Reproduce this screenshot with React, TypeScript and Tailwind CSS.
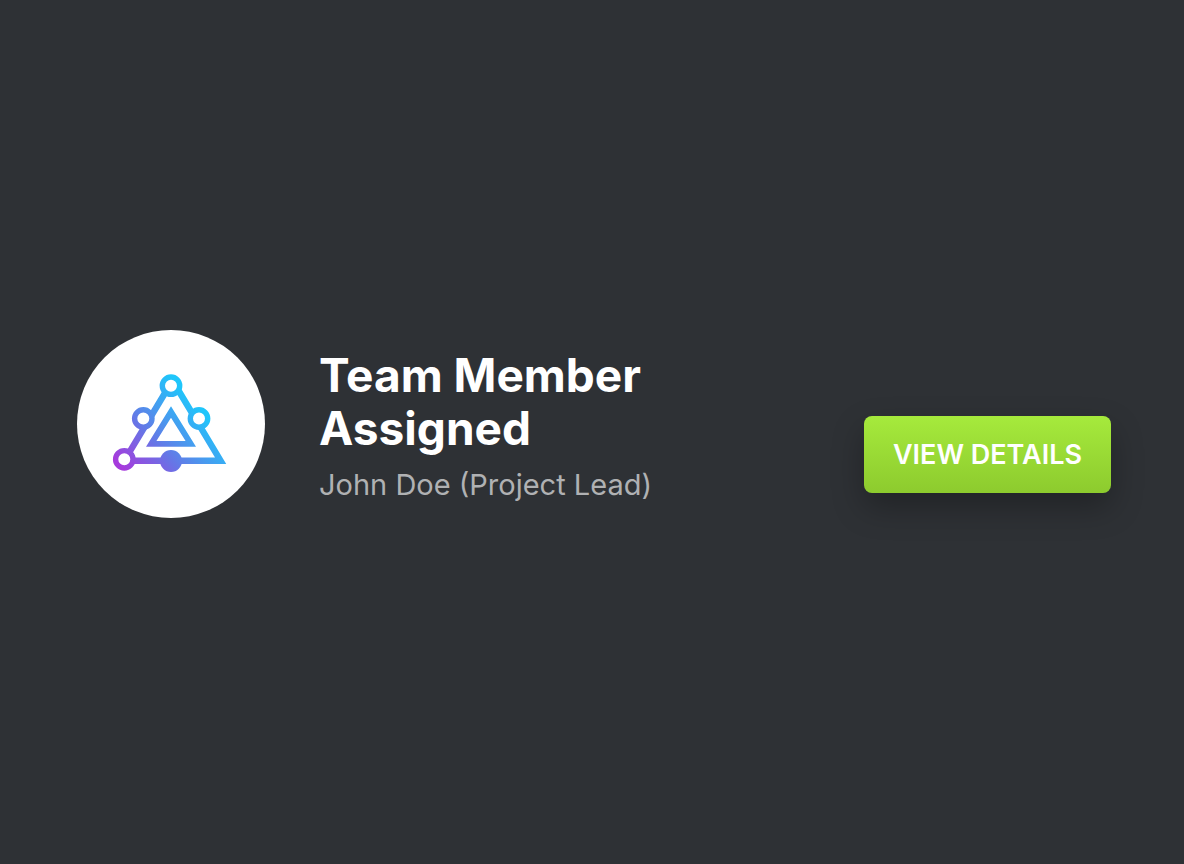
const rings = [
  { cx: 94, cy: 55.7 },
  { cx: 66.3, cy: 88.5 },
  { cx: 122, cy: 88.5 },
  { cx: 47.3, cy: 129.3 },
];

function TeamLogo() {
  return (
    <svg viewBox="0 0 188 188" className="h-full w-full" aria-hidden="true">
      <defs>
        <linearGradient
          id="logo-gradient"
          gradientUnits="userSpaceOnUse"
          x1="42"
          y1="134"
          x2="114"
          y2="68"
        >
          <stop offset="0" stopColor="#a63bdc" />
          <stop offset="0.42" stopColor="#6676e6" />
          <stop offset="0.65" stopColor="#4a98ee" />
          <stop offset="1" stopColor="#1fc6fb" />
        </linearGradient>
      </defs>

      {/* Outer path */}
      <path
        d="M94 53 L47.3 130.7 H143.6 L94 48"
        fill="none"
        stroke="url(#logo-gradient)"
        strokeWidth="6.4"
      />

      {/* Inner triangle */}
      <path
        fillRule="evenodd"
        fill="url(#logo-gradient)"
        d="M94 76.3 L119 116.7 H69 Z M94 87.8 L79.4 111 H108.6 Z"
      />

      {/* Nodes */}
      {rings.map((ring) => (
        <circle
          key={`${ring.cx}-${ring.cy}`}
          cx={ring.cx}
          cy={ring.cy}
          r="8.7"
          fill="#fff"
          stroke="url(#logo-gradient)"
          strokeWidth="5.4"
        />
      ))}
      <circle cx="94" cy="131" r="11" fill="url(#logo-gradient)" />
    </svg>
  );
}

export default function App() {
  return (
    <main className="flex min-h-screen items-center bg-[#2e3135] pr-[73px] pb-4 pl-[77px] font-['Inter',sans-serif]">
      <section className="flex w-full items-center justify-between">
        <div className="flex items-center gap-[54px]">
          <div className="size-[188px] shrink-0 overflow-hidden rounded-full bg-white">
            <TeamLogo />
          </div>

          <div className="max-w-[360px] pt-1.5">
            <h1 className="text-[46px] leading-[53px] font-bold text-white">
              Team Member Assigned
            </h1>
            <p className="mt-2.5 text-[29px] leading-[40px] text-[#b0b1b3]">
              John Doe (Project Lead)
            </p>
          </div>
        </div>

        <button
          type="button"
          className="mt-[60px] h-[77px] w-[247px] shrink-0 rounded-lg bg-linear-to-b from-[#a6ea3c] to-[#8dcb2e] pt-0.5 text-[27px] font-semibold text-white shadow-[0_14px_32px_rgba(0,0,0,0.28)]"
        >
          VIEW DETAILS
        </button>
      </section>
    </main>
  );
}
